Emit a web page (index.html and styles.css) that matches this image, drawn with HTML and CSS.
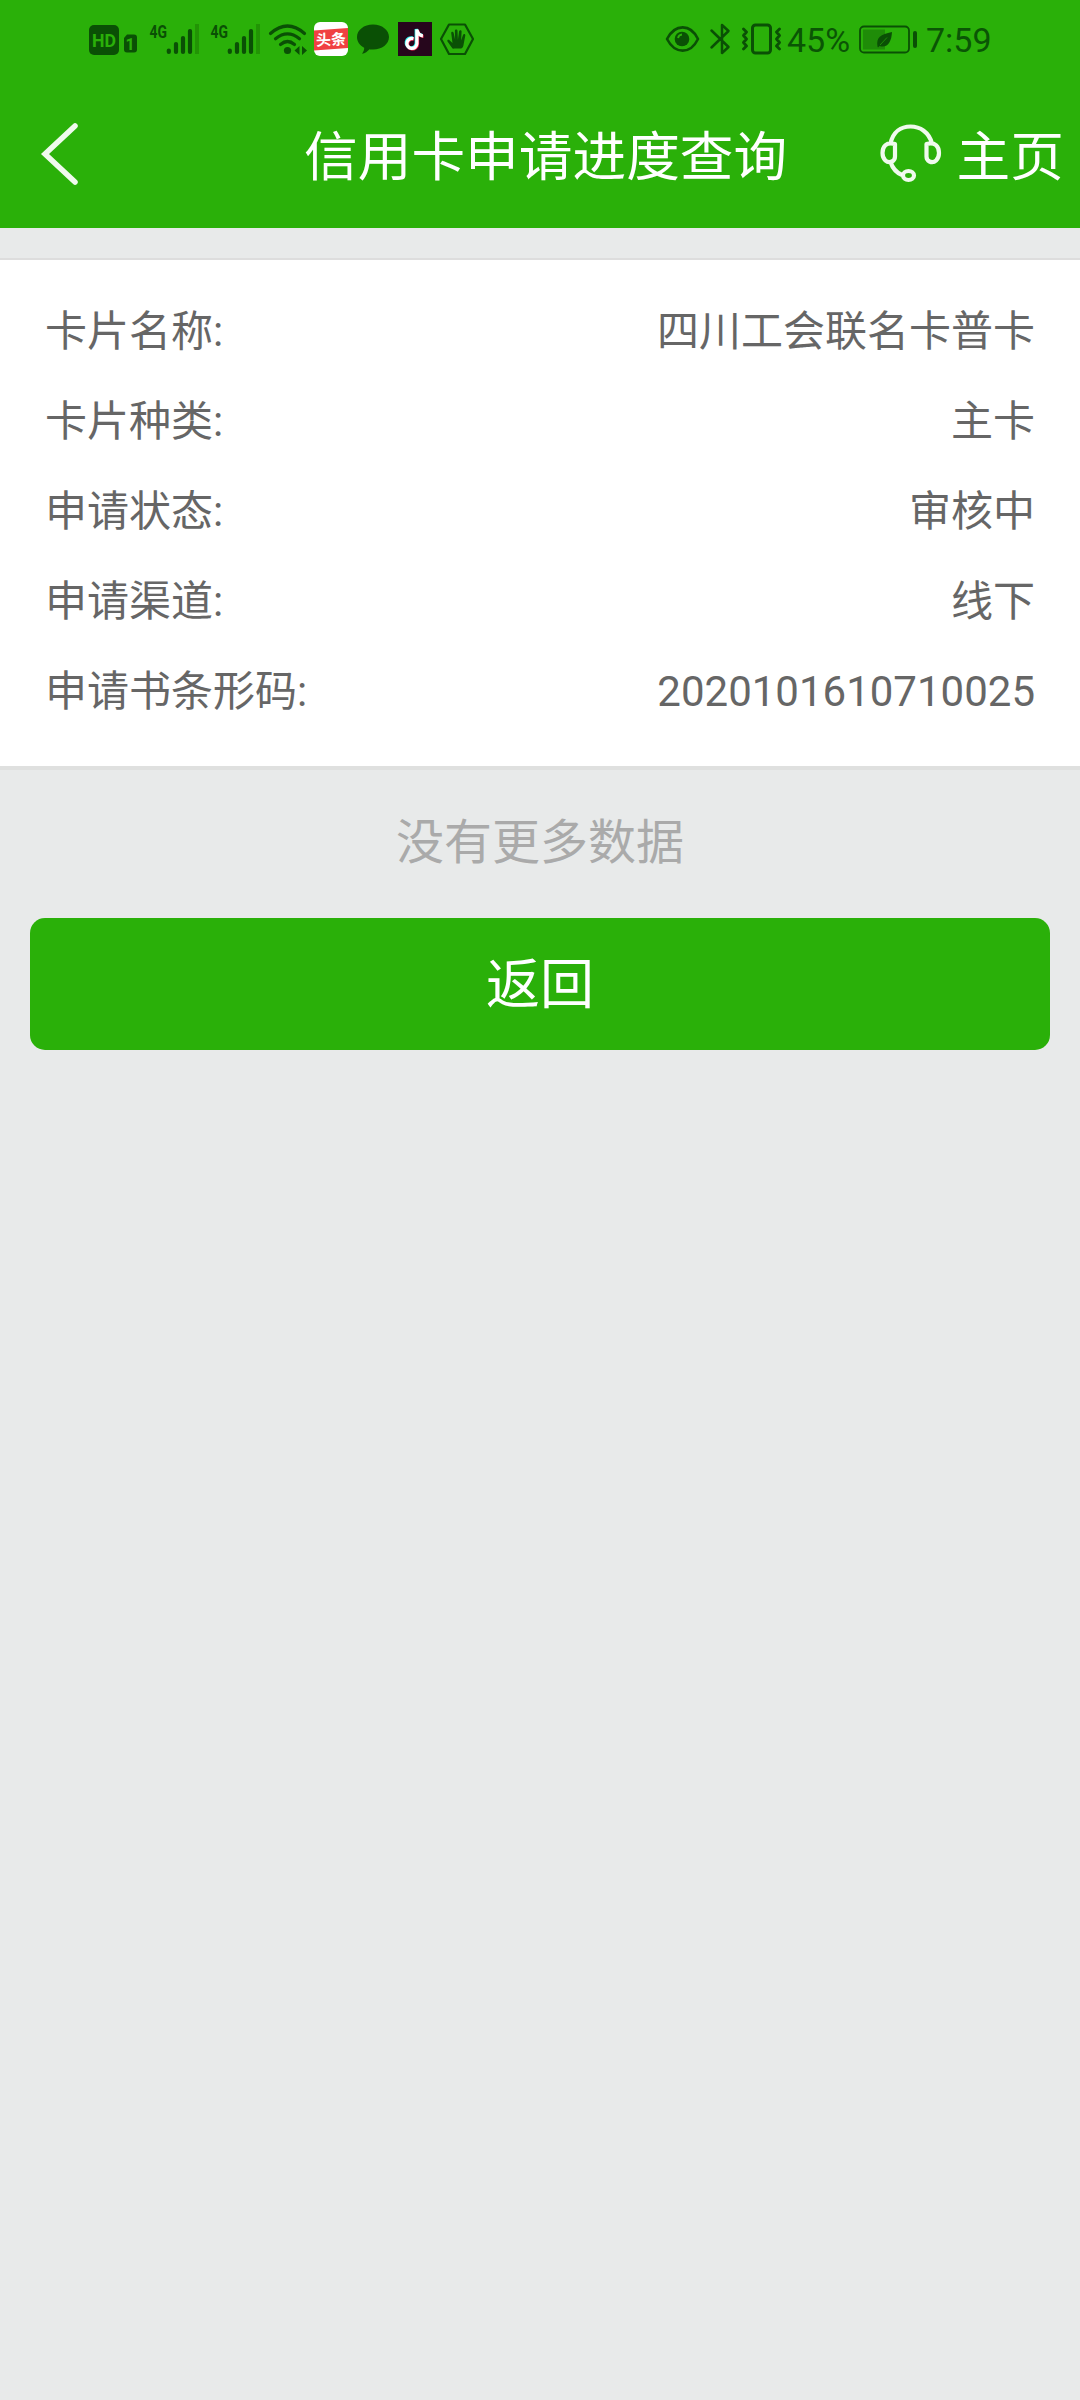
FILE: index.html
```html
<!DOCTYPE html>
<html lang="zh-CN">
<head>
<meta charset="utf-8">
<title>信用卡申请进度查询</title>
<link rel="stylesheet" href="styles.css">
</head>
<body>
<header class="header">
  <div class="status">
    <div class="status-group">
      <svg class="ink" width="56" height="34" viewBox="89 22 56 34">
        <rect x="89" y="25" width="30" height="30" rx="5"/>
        <text class="cut" x="92" y="46.500" font-size="19" textLength="24" lengthAdjust="spacingAndGlyphs">HD</text>
        <path d="M127 34.500h7q3 0 3 3v12q0 3-3 3h-7q-3 0-3-3v-11.500z"/>
        <text class="cut" x="130" y="50" font-size="16" text-anchor="middle">1</text>
      </svg>
      <svg class="ink signal" width="61" height="44" viewBox="145 12 61 44">
        <text x="149.500" y="37.500" font-size="19" textLength="17.500" lengthAdjust="spacingAndGlyphs">4G</text>
        <g class="bars"><path d="M168.800 50.500v1.500M176 44v8M183 38v14M190 31v21"/></g>
        <rect class="faint" x="195" y="24" width="4" height="30"/>
      </svg>
      <svg class="ink signal" width="61" height="44" viewBox="145 12 61 44">
        <text x="149.500" y="37.500" font-size="19" textLength="17.500" lengthAdjust="spacingAndGlyphs">4G</text>
        <g class="bars"><path d="M168.800 50.500v1.500M176 44v8M183 38v14M190 31v21"/></g>
        <rect class="faint" x="195" y="24" width="4" height="30"/>
      </svg>
      <svg class="ink" width="43" height="34" viewBox="267 22 43 34">
        <path class="line" stroke-width="3.200" d="M270.500 33.500Q287.500 18.500 304.500 33.500M275.500 38.800Q287.500 29 299.500 38.800M280.500 44.500Q287.500 38.500 294.500 44.500"/>
        <circle cx="287.500" cy="50.500" r="3.600"/>
        <path d="M299.500 46v9l-5-4.500zM302 46v9l5-4.500z"/>
      </svg>
      <svg width="42" height="34" viewBox="310 22 42 34">
        <rect x="314" y="22" width="34" height="34" rx="6" fill="#fff"/>
        <path d="M314 30.500l34-2.500v20l-34 2.500z" fill="#f04142"/>
        <text class="toutiao" x="331" y="45" text-anchor="middle" transform="rotate(-3 331 39)">头条</text>
      </svg>
      <svg class="ink" width="42" height="34" viewBox="352 22 42 34">
        <path d="M373 24.500c9 0 16 5.500 16 12.500s-7 12.500-16 12.500c-1.500 0-2.500 0-3.500-.3-2 2.300-4.500 4-7.500 4.600 1.500-2 2.300-4 2.200-6-4.500-2.300-7.200-6.300-7.200-10.800 0-7 7-12.500 16-12.500z"/>
      </svg>
      <svg width="42" height="34" viewBox="394 22 42 34">
        <rect x="398" y="22" width="34" height="34" fill="#26061c"/>
        <g fill="none" stroke-width="3.200">
          <path stroke="#25f4ee" d="M412.700 38a5 5 0 1 0 3.500 5v-14c.8 4 3 6 6 6.200"/>
          <path stroke="#fe2c55" d="M414 39.200a5 5 0 1 0 3.500 5v-14c.8 4 3 6 6 6.200"/>
          <path stroke="#fff" d="M413.400 38.600a5 5 0 1 0 3.500 5v-14c.8 4 3 6 6 6.200"/>
        </g>
      </svg>
      <svg class="ink" width="42" height="34" viewBox="436 22 42 34">
        <path class="line" stroke-width="2.200" d="M449 24.500h16l8 14.500-8 15h-16l-8-15z"/>
        <path d="M452.500 48.500l-5-7c-.8-1.500 1-2.200 2-1.200l3 2.700-1.300-10c0-1.600 2-1.800 2.400-.3l1.500 7-.2-9c0-1.700 2.500-1.700 2.600 0l.4 9 1.200-8.500c.3-1.600 2.600-1.300 2.500.3l-.5 9 2-5.800c.6-1.400 2.500-.8 2.200.7l-2 10.600c-.5 2-1.800 2.500-3.300 2.500h-4.500c-1.300 0-2.200.3-3 0z"/>
      </svg>
    </div>
    <div class="status-group">
      <svg class="ink" width="38" height="34" viewBox="664 22 38 34">
        <path class="line" stroke-width="2.600" d="M667 39c8-15.500 23.500-15.500 31 0-7.500 15.500-23 15.500-31 0z"/>
        <circle cx="682" cy="39" r="7.300"/><path class="shine" d="M678 38a4.500 4.500 0 0 1 4-3.500"/>
      </svg>
      <svg class="ink" width="36" height="34" viewBox="702 22 36 34">
        <path class="line" stroke-width="2.500" d="M711.500 30.500l17 16.500-6.500 6V25l6.500 6-17 16.500"/>
      </svg>
      <svg class="ink" width="49" height="34" viewBox="738 22 49 34">
        <rect class="line" stroke-width="3" x="752.500" y="25" width="18" height="28" rx="3"/>
        <path class="line" stroke-width="2.800" d="M743.500 29l3 3-3 3.500 3 3.500-3 3.500 3 3.500-3 3M779.500 29l-3 3 3 3.500-3 3.500 3 3.500-3 3.500 3 3"/>
      </svg>
      <span class="battery-text">45%</span>
      <svg class="ink" width="62" height="34" viewBox="858 22 62 34">
        <rect class="line" stroke-width="1.800" x="860" y="26.500" width="49" height="26" rx="4"/>
        <rect class="charge" x="863" y="29.500" width="22" height="20"/>
        <path d="M877.500 46.500c-1.500-9 3-12 14.500-14.500-.5 10-4.500 16.500-12.500 14l-1.500 1.500z"/>
        <path class="vein" d="M880 45l7-7.500"/>
        <rect x="913" y="31" width="4" height="17" rx="2"/>
      </svg>
      <span class="clock">7:59</span>
    </div>
  </div>
  <nav class="nav">
    <svg class="back" width="44" height="68" viewBox="38 120 44 68"><path d="M75 126L45 154l30 28"/></svg>
    <h1 class="title">信用卡申请进度查询</h1>
    <svg class="headset" width="64" height="64" viewBox="878 122 64 64">
      <path d="M890.500 143.500C893 132 901 126.500 910.500 126.500S929 132 932 143.500M895 144c-9-2.500-12.500 3-12.500 9s4.500 11 9.500 8.500c2-1 3-3 3-5zM926.500 144c9-2.500 12.500 3 12.500 9s-4.500 11-9.500 8.500c-2-1-3-3-3-5zM890.500 162c2 6 5.500 10.500 11.500 13"/>
      <ellipse cx="908.500" cy="175.500" rx="5.500" ry="4.500"/>
    </svg>
    <span class="home">主页</span>
  </nav>
</header>
<main>
  <dl class="card">
    <div class="row"><dt>卡片名称:</dt><dd>四川工会联名卡普卡</dd></div>
    <div class="row"><dt>卡片种类:</dt><dd>主卡</dd></div>
    <div class="row"><dt>申请状态:</dt><dd>审核中</dd></div>
    <div class="row"><dt>申请渠道:</dt><dd>线下</dd></div>
    <div class="row"><dt>申请书条形码:</dt><dd>2020101610710025</dd></div>
  </dl>
  <p class="empty">没有更多数据</p>
  <button class="return" type="button">返回</button>
</main>
</body>
</html>
```
FILE: styles.css
```css
* { box-sizing: border-box; }
body {
  margin: 0;
  min-height: 2400px;
  background: #e8eaea;
  color: #666;
  font-family: Roboto, "Noto Sans CJK SC", sans-serif;
}
.header { height: 228px; background: #2ab009; color: #fff; }
.status {
  display: flex;
  justify-content: space-between;
  height: 78px;
  padding: 22px 90px 0 89px;
  color: #0a5505;
}
.status-group { display: flex; height: 34px; }
.status svg { flex: none; overflow: visible; }
.status .signal { margin-top: -10px; }
.ink { fill: #0a5005; }
.ink text { font-family: Roboto, sans-serif; font-weight: 700; }
.ink .cut { fill: #2ab009; }
.ink .faint { fill: #229405; }
.ink .line, .bars { fill: none; stroke: #0a5005; stroke-linejoin: round; stroke-linecap: round; }
.bars { stroke-width: 4.2; }
.ink .shine { fill: none; stroke: #2ab009; stroke-width: 1.8; }
.ink .charge { fill: #1f8c08; }
.ink .vein { fill: none; stroke: #1f8c08; stroke-width: 1; }
.toutiao { fill: #fff; font: 700 15px "Noto Sans CJK SC", sans-serif; }
.battery-text, .clock { font-size: 34px; line-height: 36px; white-space: nowrap; }
.battery-text { width: 71px; }
.clock { width: 70px; padding-left: 6px; }
.nav { display: flex; align-items: center; height: 150px; padding: 0 16px 0 38px; }
.back { margin-top: 2px; }
.back path { fill: none; stroke: #fff; stroke-opacity: .93; stroke-width: 5.5; stroke-linecap: round; stroke-linejoin: miter; }
.title { margin: 10px 0 0 222px; font-size: 53.7px; line-height: 80px; font-weight: 400; white-space: nowrap; }
.headset { margin: 2px 0 0 auto; fill: none; stroke: #fff; stroke-opacity: .93; stroke-width: 4.2; stroke-linejoin: round; }
.home { margin: 10px 0 0 15px; font-size: 53.7px; line-height: 80px; white-space: nowrap; }
.card {
  margin: 30px 0 0;
  height: 512px;
  padding: 27px 45px 0;
  background: #fff;
  border-top: 2px solid #ddd;
  border-bottom: 4px solid #dfe0df;
}
.row { display: flex; justify-content: space-between; height: 90px; font-size: 42px; line-height: 90px; }
.row dd { margin: 0; }
.empty { margin: 0; height: 148px; font-size: 48px; line-height: 145px; text-align: center; color: #aaa; }
.return {
  display: block;
  width: 1020px;
  height: 132px;
  margin: 0 auto;
  padding: 4px 0 0;
  border: 0;
  border-radius: 15px;
  background: #2ab009;
  color: #fff;
  font: 400 54px/128px Roboto, "Noto Sans CJK SC", sans-serif;
}
```
